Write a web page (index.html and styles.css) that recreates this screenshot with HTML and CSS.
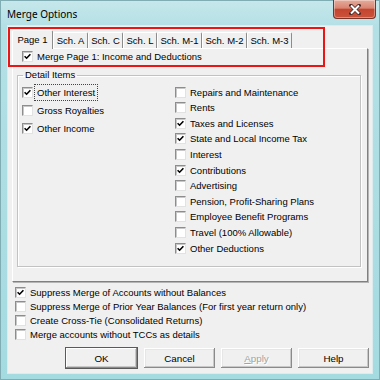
FILE: index.html
```html
<!DOCTYPE html>
<html lang="en">
<head>
    <meta charset="UTF-8">
    <title>Merge Options</title>
    <link rel="stylesheet" href="styles.css">
</head>
<body>

<div class="window">
    <div class="titlebar">
        <span class="title">Merge Options</span>
        <button class="close" type="button">
            <svg width="12" height="11" viewBox="0 0 12 11">
                <path d="M2 1.5 L10 9.5 M10 1.5 L2 9.5" stroke="#4a2a26" stroke-width="3.6" stroke-linecap="square"/>
                <path d="M2 1.5 L10 9.5 M10 1.5 L2 9.5" stroke="#fff" stroke-width="2"/>
            </svg>
        </button>
    </div>

    <div class="client">
        <div class="tabs">
            <div class="tab active w41">Page 1</div>
            <div class="tab w35">Sch. A</div>
            <div class="tab w35">Sch. C</div>
            <div class="tab w34">Sch. L</div>
            <div class="tab w45">Sch. M-1</div>
            <div class="tab w45">Sch. M-2</div>
            <div class="tab w45">Sch. M-3</div>
        </div>

        <div class="panel">
            <label class="check merge"><span class="box on"></span>Merge Page 1: Income and Deductions</label>

            <fieldset class="group">
                <legend>Detail Items</legend>
                <div class="cols">
                    <div class="col left">
                        <label class="check"><span class="box on"></span><span class="focus">Other Interest</span></label>
                        <label class="check"><span class="box"></span>Gross Royalties</label>
                        <label class="check"><span class="box on"></span>Other Income</label>
                    </div>
                    <div class="col right">
                        <label class="check"><span class="box"></span>Repairs and Maintenance</label>
                        <label class="check"><span class="box"></span>Rents</label>
                        <label class="check"><span class="box on"></span>Taxes and Licenses</label>
                        <label class="check"><span class="box on"></span>State and Local Income Tax</label>
                        <label class="check"><span class="box"></span>Interest</label>
                        <label class="check"><span class="box on"></span>Contributions</label>
                        <label class="check"><span class="box"></span>Advertising</label>
                        <label class="check"><span class="box"></span>Pension, Profit-Sharing Plans</label>
                        <label class="check"><span class="box"></span>Employee Benefit Programs</label>
                        <label class="check"><span class="box"></span>Travel (100% Allowable)</label>
                        <label class="check"><span class="box on"></span>Other Deductions</label>
                    </div>
                </div>
            </fieldset>
        </div>

        <div class="options">
            <label class="check"><span class="box on"></span>Suppress Merge of Accounts without Balances</label>
            <label class="check"><span class="box"></span>Suppress Merge of Prior Year Balances (For first year return only)</label>
            <label class="check"><span class="box"></span>Create Cross-Tie (Consolidated Returns)</label>
            <label class="check"><span class="box"></span>Merge accounts without TCCs as details</label>
        </div>

        <div class="buttons">
            <button class="btn default" type="button">OK</button>
            <button class="btn" type="button">Cancel</button>
            <button class="btn" type="button" disabled><u>A</u>pply</button>
            <button class="btn" type="button">Help</button>
        </div>
    </div>

    <!-- annotation box drawn over the tab strip -->
    <div class="highlight"></div>
</div>

</body>
</html>
```

FILE: styles.css
```css
body {
    margin: 0;
    padding: 0;
    background-color: #a6dce2;
}

.window {
    position: relative;
    width: 380px;
    height: 380px;
    box-sizing: border-box;
    display: flex;
    flex-direction: column;
    background: linear-gradient(180deg, #c6e7eb 0px, #b3e0e5 26px, #a4dbe1 100%);
    border: 1px solid #7fadb3;
    font-family: "Liberation Sans", Arial, sans-serif;
    font-size: 9.5px;
    color: #000;
}

.titlebar {
    display: flex;
    height: 25px;
    flex-shrink: 0;
}

.title {
    font-family: "Noto Sans", sans-serif;
    font-size: 10px;
    color: #000;
    padding: 6px 0 0 6px;
    line-height: 14px;
}

.close {
    margin: -1px 3px 0 auto;
    width: 43px;
    height: 19px;
    padding: 0;
    border: 1px solid #7a3328;
    border-top: none;
    border-radius: 0 0 4px 4px;
    background: linear-gradient(180deg, #e6ab9c 0%, #d88471 45%, #c5452f 52%, #c9533c 100%);
    box-shadow: inset 0 0 0 1px rgba(255, 255, 255, 0.35);
    display: flex;
    align-items: center;
    justify-content: center;
}

.client {
    flex: 1;
    margin: 0 7px 6px 7px;
    background-color: #f0f0f0;
    box-shadow: 0 0 0 1px #dcecee;
    display: flex;
    flex-direction: column;
}

/* tab strip */
.tabs {
    display: flex;
    align-items: flex-end;
    height: 22px;
    padding-left: 4px;
}

.tab {
    height: 16px;
    line-height: 16px;
    text-align: center;
    white-space: nowrap;
    border-top: 1px solid #fff;
    border-left: 1px solid #fff;
    border-right: 1px solid #8c8c8c;
    border-radius: 2px 2px 0 0;
    box-sizing: border-box;
}

.w34 { width: 34px; }
.w35 { width: 35px; }
.w41 { width: 41px; }
.w45 { width: 45px; }

.tab.active {
    height: 19px;
    line-height: 18px;
    margin-bottom: -1px;
    background-color: #f0f0f0;
    position: relative;
}

.panel {
    height: 234px;
    margin: 0 4px;
    box-sizing: border-box;
    border: 1px solid;
    border-color: #fff #808080 #808080 #fff;
    box-shadow: 1px 1px 0 #b5b5b5;
    padding: 0 6px 0 4px;
}

/* checkboxes */
.check {
    display: flex;
    align-items: center;
    white-space: nowrap;
}

.box {
    width: 11px;
    height: 11px;
    box-sizing: border-box;
    margin-right: 4px;
    flex-shrink: 0;
    background-color: #fff;
    border: 1px solid;
    border-color: #8d8d8d #e2e2e2 #e2e2e2 #8d8d8d;
    box-shadow: inset 1px 1px 0 #c8c8c8;
}

.box.on {
    background: #fff url("data:image/svg+xml,%3Csvg xmlns='http://www.w3.org/2000/svg' width='9' height='9'%3E%3Cpath d='M1.6 4.2 L3.6 6.2 L7.4 2.2' fill='none' stroke='%23000' stroke-width='1.6'/%3E%3C/svg%3E") no-repeat 0 0;
}

.merge {
    height: 14px;
    padding-left: 5px;
}

.focus {
    outline: 1px dotted #444;
    outline-offset: 2px;
}

/* detail items group */
.group {
    margin: 5px 0 0 0;
    padding: 1px 0 0 0;
    height: 199px;
    box-sizing: border-box;
    border: 1px solid #c2c2c2;
    box-shadow: inset 1px 1px 0 #fff, 1px 1px 0 #fff;
    min-width: 0;
}

.group legend {
    margin-left: 5px;
    padding: 0 2px;
    line-height: 14px;
}

.cols {
    display: grid;
    grid-template-columns: 153px 1fr;
    padding-left: 4px;
}

.left .check {
    height: 18.4px;
}

.right {
    padding-top: 1.4px;
}

.right .check {
    height: 15.6px;
}

/* options under the tab panel */
.options {
    margin-top: 3px;
    padding-left: 7px;
}

.options .check {
    height: 14px;
}

.buttons {
    display: flex;
    justify-content: flex-end;
    gap: 6px;
    margin-top: 7px;
    padding-right: 3px;
}

.btn {
    width: 71px;
    height: 20px;
    padding: 0;
    font-family: "Liberation Sans", Arial, sans-serif;
    font-size: 9.8px;
    color: #000;
    background-color: #f0f0f0;
    border: none;
    box-shadow: inset -1px -1px 0 #8a8a8a, inset 1px 1px 0 #fff, inset -2px -2px 0 #c8c8c8, inset 2px 2px 0 #e6e6e6;
}

.btn.default {
    box-shadow: 0 0 0 1px #5a5a5a, inset -1px -1px 0 #8a8a8a, inset 1px 1px 0 #fff, inset -2px -2px 0 #c8c8c8;
    margin-right: 1px;
}

.btn:disabled {
    color: #a3a3a3;
    text-shadow: 1px 1px 0 #fff;
}

.highlight {
    position: absolute;
    left: 7px;
    top: 26px;
    width: 317px;
    height: 40px;
    box-sizing: border-box;
    border: 2px solid #ea1515;
}
```
